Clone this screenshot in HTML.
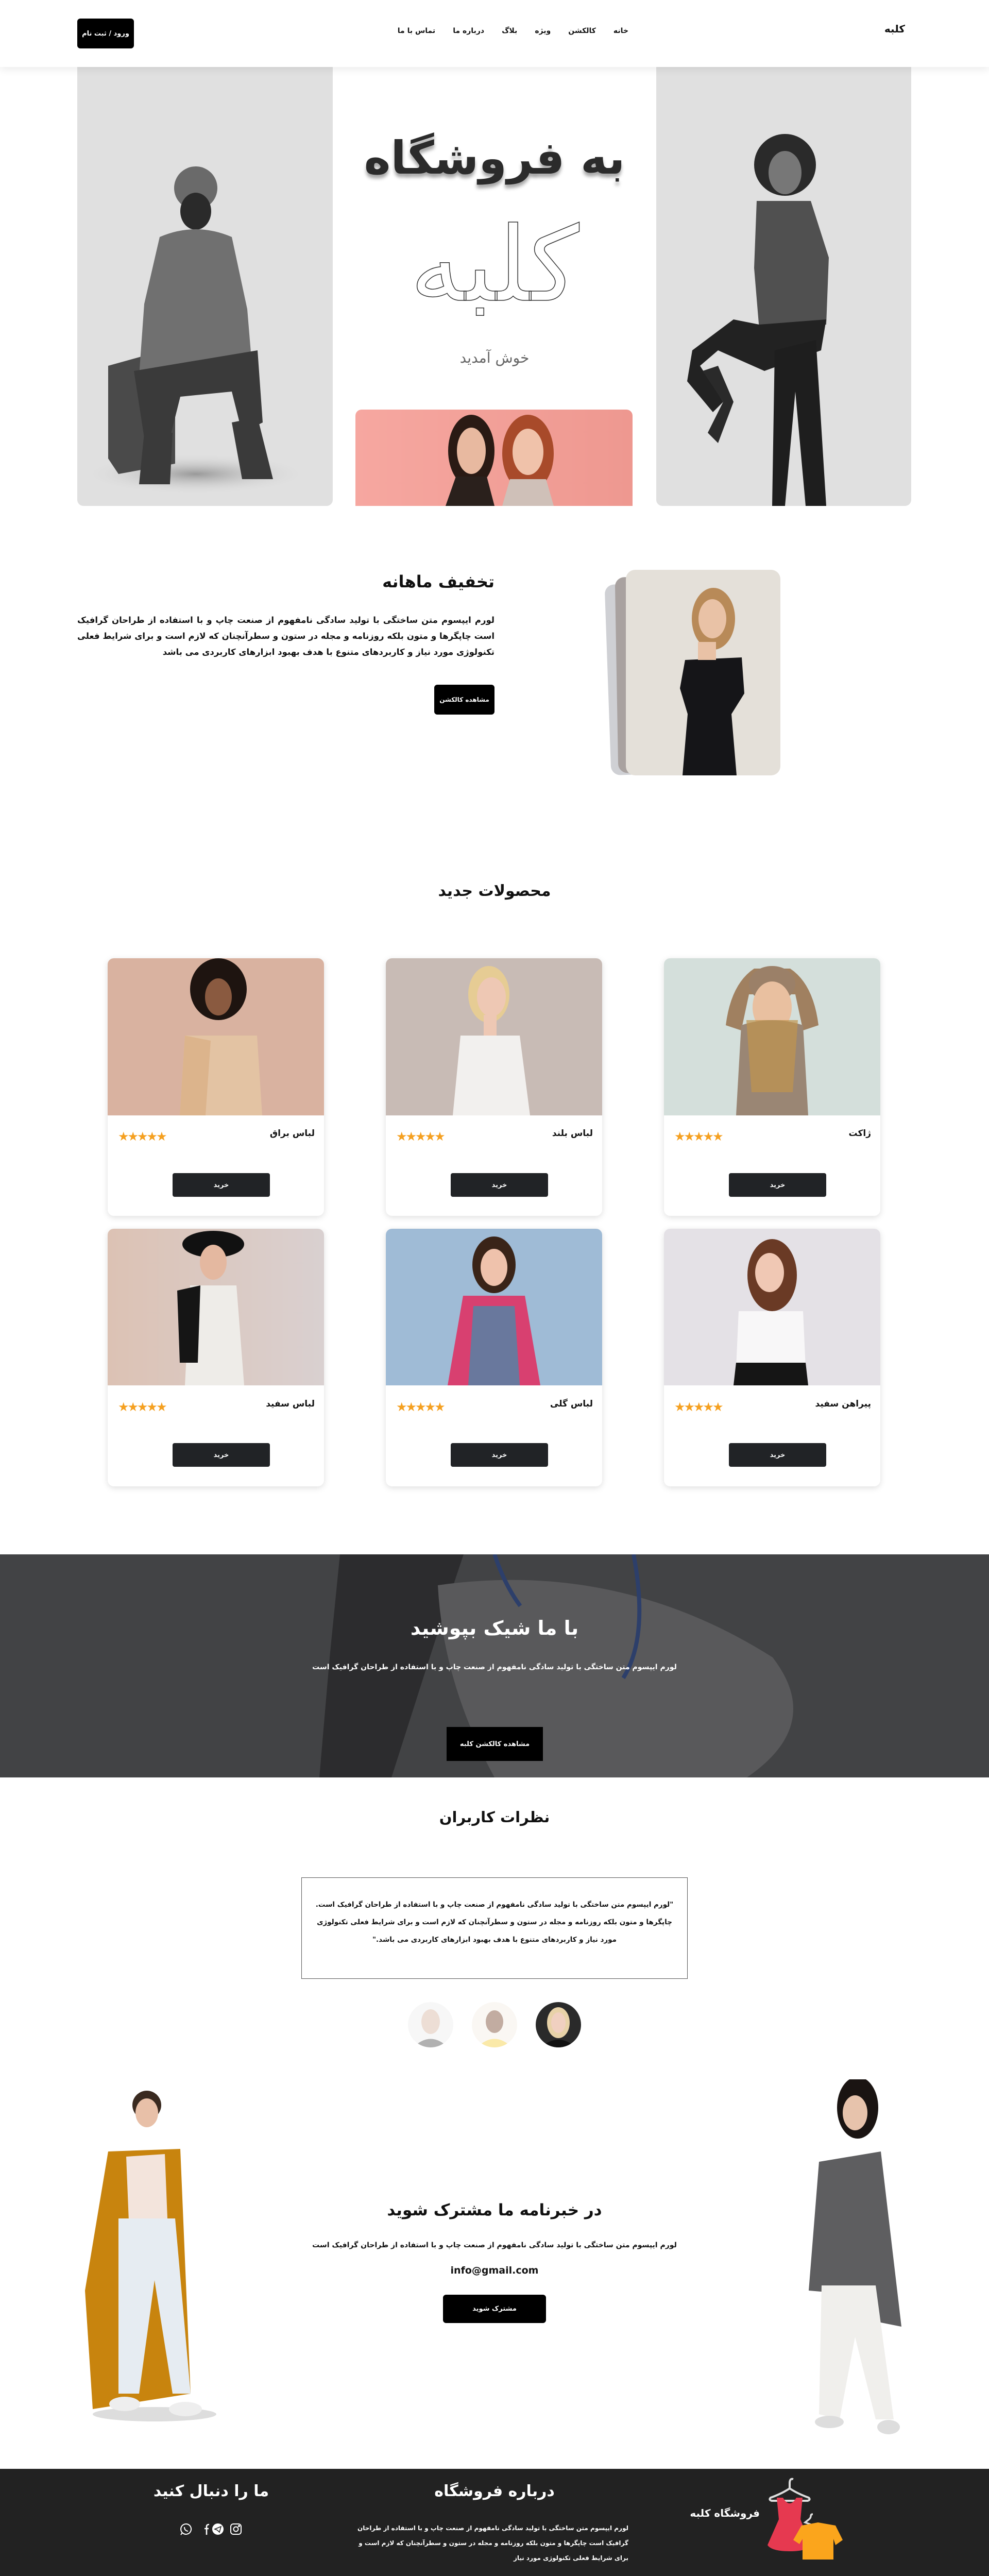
<!DOCTYPE html>
<html lang="fa" dir="rtl"><head><meta charset="utf-8"><title>کلبه</title>
<style>
*{margin:0;padding:0;box-sizing:border-box}
html{width:1920px;height:5003px;overflow:hidden}
body{width:1920px;height:5003px;position:relative;background:#fff;font-family:"DejaVu Sans",sans-serif;color:#111;overflow:hidden}
#w{position:absolute;left:0;top:0;width:1920px;height:5003px;overflow:hidden}
.a{position:absolute}
.c{text-align:center}
.btn{position:absolute;background:#000;color:#fff;border-radius:6px;display:flex;align-items:center;justify-content:center;font-weight:bold;font-size:13px}
.card{position:absolute;width:420px;background:#fff;border-radius:12px;box-shadow:0 3px 12px rgba(0,0,0,.13);overflow:hidden}
.card .img{height:305px;position:relative;overflow:hidden}
.card .t{position:absolute;right:18px;top:330px;font-size:17px;font-weight:bold}
.card .s{position:absolute;left:20px;top:332px;color:#f5a020;font-size:24px;letter-spacing:-3px}
.card .b{position:absolute;left:126px;width:189px;height:46px;background:#212326;color:#fff;border-radius:4px;font-size:13px;font-weight:bold;display:flex;align-items:center;justify-content:center}
p{font-weight:bold}
</style></head><body><div id="w">

<!-- NAV -->
<div class="a" style="left:0;top:0;width:1920px;height:130px;background:#fff;box-shadow:0 6px 14px rgba(0,0,0,.07);z-index:2"></div>
<div class="a" style="z-index:3;right:163px;top:44px;font-size:20px;font-weight:bold">کلبه</div>
<div class="a" style="z-index:3;left:760px;top:52px;width:460px;display:flex;gap:34px;font-size:14px;direction:rtl;font-weight:bold"><span>خانه</span><span>کالکشن</span><span>ویژه</span><span>بلاگ</span><span>درباره ما</span><span>تماس با ما</span></div>
<div class="btn" style="z-index:3;left:150px;top:36px;width:110px;height:58px;font-size:13px">ورود / ثبت نام</div>

<!-- HERO -->
<div class="a" style="left:150px;top:120px;width:496px;height:862px;background:#e0e0e0;border-radius:0 0 12px 12px;overflow:hidden">
<svg width="496" height="862" viewBox="0 0 496 862"><defs><radialGradient id="sh"><stop offset="0" stop-color="#999"/><stop offset="1" stop-color="#e0e0e0" stop-opacity="0"/></radialGradient></defs>
<ellipse cx="230" cy="800" rx="220" ry="40" fill="url(#sh)"/>
<path d="M60 590 L150 565 L190 600 L190 780 L80 800 L60 770Z" fill="#4a4a4a"/>
<circle cx="230" cy="245" r="42" fill="#6a6a6a"/>
<ellipse cx="230" cy="290" rx="30" ry="36" fill="#2a2a2a"/>
<path d="M160 340 Q230 310 300 340 L330 480 L340 600 L120 610 L130 470Z" fill="#707070"/>
<path d="M110 600 L350 560 L360 700 L320 720 L300 640 L200 650 L180 730 L130 730Z" fill="#3a3a3a"/>
<path d="M130 720 L185 720 L180 820 L120 820Z" fill="#3a3a3a"/>
<path d="M300 700 L350 690 L380 810 L320 810Z" fill="#3a3a3a"/>
</svg></div>
<div class="a" style="left:1274px;top:120px;width:495px;height:862px;background:#e0e0e0;border-radius:0 0 12px 12px;overflow:hidden">
<svg width="495" height="862" viewBox="0 0 495 862">
<circle cx="250" cy="200" r="60" fill="#2a2a2a"/>
<ellipse cx="250" cy="215" rx="32" ry="42" fill="#777"/>
<path d="M195 270 L300 270 L335 380 L330 510 L200 520 L190 400Z" fill="#505050"/>
<path d="M200 510 L330 500 L320 560 L210 600 L120 560 L85 590 L130 660 L110 680 L60 620 L70 560 L150 500Z" fill="#222"/>
<path d="M230 560 L310 540 L330 862 L290 862 L270 640 L250 862 L225 862Z" fill="#1e1e1e"/>
<path d="M90 600 L130 660 L100 720 L120 740 L150 660 L120 590Z" fill="#2a2a2a"/>
</svg></div>

<div class="a c" style="left:690px;top:250px;width:540px;font-size:88px;font-weight:bold;color:#2b2b2b;text-shadow:0 7px 7px rgba(0,0,0,.35);line-height:1.3">به فروشگاه</div>
<div class="a c" style="left:690px;top:395px;width:540px;font-size:200px;font-weight:normal;color:#fff;-webkit-text-stroke:1.5px #333;line-height:1.2">کلبه</div>
<div class="a c" style="left:690px;top:678px;width:540px;font-size:28px;color:#666">خوش آمدید</div>
<div class="a" style="left:690px;top:795px;width:538px;height:187px;background:linear-gradient(90deg,#f6a7a0,#ee9890);border-radius:12px 12px 0 0;overflow:hidden">
<svg width="538" height="187"><ellipse cx="225" cy="80" rx="45" ry="70" fill="#2a1a14"/><ellipse cx="225" cy="80" rx="28" ry="45" fill="#e8b9a0"/><path d="M175 187 L195 130 L255 130 L270 187Z" fill="#2a201c"/><ellipse cx="335" cy="85" rx="50" ry="75" fill="#a84a2a"/><ellipse cx="335" cy="82" rx="30" ry="45" fill="#f0c2aa"/><path d="M285 187 L300 135 L370 135 L385 187Z" fill="#cfc0b8"/></svg></div>

<!-- MONTHLY -->
<div class="a" style="left:1180px;top:1130px;width:290px;height:370px;background:#cfd0d4;border-radius:18px;transform:rotate(-2deg)"></div>
<div class="a" style="left:1197px;top:1118px;width:290px;height:380px;background:#a9a2a0;border-radius:18px;transform:rotate(-1deg)"></div>
<div class="a" style="left:1215px;top:1106px;width:300px;height:399px;background:#e4e0d9;border-radius:18px;overflow:hidden">
<svg width="300" height="399"><ellipse cx="170" cy="95" rx="42" ry="60" fill="#b88a58"/><ellipse cx="168" cy="95" rx="27" ry="38" fill="#e9c2a6"/><path d="M115 175 L225 170 L230 240 L205 280 L215 399 L110 399 L120 280 L105 230Z" fill="#151518"/><rect x="140" y="140" width="35" height="35" fill="#e9c2a6"/></svg></div>
<div class="a" style="left:700px;top:1110px;width:260px;font-size:32px;font-weight:bold;text-align:right">تخفیف ماهانه</div>
<p class="a" style="left:150px;top:1188px;width:810px;font-size:16.5px;line-height:31px;text-align:justify;text-align-last:right">لورم ایپسوم متن ساختگی با تولید سادگی نامفهوم از صنعت چاپ و با استفاده از طراحان گرافیک است چاپگرها و متون بلکه روزنامه و مجله در ستون و سطرآنچنان که لازم است و برای شرایط فعلی تکنولوژی مورد نیاز و کاربردهای متنوع با هدف بهبود ابزارهای کاربردی می باشد</p>
<div class="btn" style="left:843px;top:1329px;width:117px;height:58px;font-size:12px">مشاهده کالکشن</div>

<!-- PRODUCTS -->
<div class="a c" style="left:0;top:1712px;width:1920px;font-size:30px;font-weight:bold">محصولات جدید</div>

<div class="card" style="left:1289px;top:1860px;height:500px"><div class="img" style="background:#d4dfdb"><svg width="420" height="305"><path d="M120 130 Q130 50 175 20 L245 20 Q290 50 300 130 L270 140 L255 70 L165 70 L150 140Z" fill="#a08060"/><ellipse cx="210" cy="50" rx="45" ry="35" fill="#9b8068"/><ellipse cx="210" cy="95" rx="38" ry="50" fill="#e9c0a0"/><path d="M150 130 Q210 110 270 130 L280 305 L140 305Z" fill="#9a8674"/><path d="M160 120 L170 260 L250 260 L260 120" fill="#c0944e" opacity=".7"/></svg></div><div class="t">ژاکت</div><div class="s">★★★★★</div><div class="b" style="top:417px">خرید</div></div>
<div class="card" style="left:749px;top:1860px;height:500px"><div class="img" style="background:#c8bbb5"><svg width="420" height="305"><ellipse cx="200" cy="70" rx="40" ry="55" fill="#e6cc94"/><ellipse cx="205" cy="75" rx="28" ry="38" fill="#eec8b4"/><path d="M145 150 L260 150 L280 305 L130 305Z" fill="#f2f0ee"/><rect x="190" y="110" width="25" height="40" fill="#eec8b4"/></svg></div><div class="t">لباس بلند</div><div class="s">★★★★★</div><div class="b" style="top:417px">خرید</div></div>
<div class="card" style="left:209px;top:1860px;height:500px"><div class="img" style="background:#d9b2a0"><svg width="420" height="305"><ellipse cx="215" cy="60" rx="55" ry="60" fill="#1e1410"/><ellipse cx="215" cy="75" rx="26" ry="36" fill="#8a5a40"/><path d="M150 150 L290 150 L300 305 L140 305Z" fill="#e3c3a3"/><path d="M150 150 L200 160 L190 305 L140 305Z" fill="#dcb48c"/></svg></div><div class="t">لباس براق</div><div class="s">★★★★★</div><div class="b" style="top:417px">خرید</div></div>

<div class="card" style="left:1289px;top:2385px;height:500px"><div class="img" style="background:#e4e1e6;height:304px"><svg width="420" height="304"><ellipse cx="210" cy="90" rx="48" ry="70" fill="#6a3a25"/><ellipse cx="205" cy="85" rx="28" ry="38" fill="#f0c8b4"/><path d="M145 160 L270 160 L275 270 L140 270Z" fill="#f8f7f8"/><path d="M140 260 L275 260 L280 304 L135 304Z" fill="#151515"/></svg></div><div class="t" style="top:330px">پیراهن سفید</div><div class="s">★★★★★</div><div class="b" style="top:416px">خرید</div></div>
<div class="card" style="left:749px;top:2385px;height:500px"><div class="img" style="background:#9fbbd6;height:304px"><svg width="420" height="304"><ellipse cx="210" cy="70" rx="42" ry="55" fill="#3a2418"/><ellipse cx="210" cy="75" rx="26" ry="36" fill="#efc2ac"/><path d="M150 130 L270 130 L300 304 L120 304Z" fill="#d84070"/><path d="M170 150 L250 150 L260 304 L160 304Z" fill="#3a90b0" opacity=".7"/></svg></div><div class="t" style="top:330px">لباس گلی</div><div class="s">★★★★★</div><div class="b" style="top:416px">خرید</div></div>
<div class="card" style="left:209px;top:2385px;height:500px"><div class="img" style="background:linear-gradient(90deg,#dcc2b4,#d9d0d0);height:304px"><svg width="420" height="304"><ellipse cx="205" cy="30" rx="60" ry="26" fill="#111"/><ellipse cx="205" cy="65" rx="26" ry="34" fill="#e4b8a0"/><path d="M160 110 L250 110 L265 304 L150 304Z" fill="#eeece8"/><path d="M135 120 L180 110 L175 260 L140 260Z" fill="#151515"/></svg></div><div class="t" style="top:330px">لباس سفید</div><div class="s">★★★★★</div><div class="b" style="top:416px">خرید</div></div>

<!-- BANNER -->
<div class="a" style="left:0;top:3017px;width:1920px;height:433px;background:#424345;overflow:hidden">
<svg width="1920" height="433"><path d="M660 0 L900 0 L860 120 L760 433 L620 433 L640 200Z" fill="#2c2c2e"/><path d="M850 60 Q1200 10 1500 200 Q1600 330 1450 433 L960 433 Q860 250 850 60Z" fill="#59595b"/><path d="M1230 0 Q1260 160 1210 240" stroke="#2d3f6a" stroke-width="8" fill="none"/><path d="M960 0 Q980 60 1010 100" stroke="#2d3f6a" stroke-width="8" fill="none"/></svg></div>
<div class="a c" style="left:0;top:3138px;width:1920px;font-size:38px;font-weight:bold;color:#fff">با ما شیک بپوشید</div>
<p class="a c" style="left:0;top:3228px;width:1920px;font-size:14px;color:#fff">لورم ایپسوم متن ساختگی با تولید سادگی نامفهوم از صنعت چاپ و با استفاده از طراحان گرافیک است</p>
<div class="btn" style="left:867px;top:3352px;width:187px;height:66px;border-radius:0;font-size:13px">مشاهده کالکشن کلبه</div>

<!-- REVIEWS -->
<div class="a c" style="left:0;top:3510px;width:1920px;font-size:29px;font-weight:bold">نظرات کاربران</div>
<div class="a" style="left:585px;top:3644px;width:750px;height:197px;border:1px solid #555"></div>
<p class="a c" style="left:605px;top:3680px;width:710px;font-size:13.5px;line-height:34px">"لورم ایپسوم متن ساختگی با تولید سادگی نامفهوم از صنعت چاپ و با استفاده از طراحان گرافیک است. چاپگرها و متون بلکه روزنامه و مجله در ستون و سطرآنچنان که لازم است و برای شرایط فعلی تکنولوژی مورد نیاز و کاربردهای متنوع با هدف بهبود ابزارهای کاربردی می باشد."</p>
<div class="a" style="left:792px;top:3886px;width:88px;height:88px;border-radius:50%;background:#eee;opacity:.45;overflow:hidden"><svg width="88" height="88"><ellipse cx="44" cy="38" rx="18" ry="24" fill="#d9b8a4"/><path d="M10 88 Q44 55 78 88Z" fill="#555"/></svg></div>
<div class="a" style="left:916px;top:3886px;width:88px;height:88px;border-radius:50%;background:#f4eee6;opacity:.45;overflow:hidden"><svg width="88" height="88"><ellipse cx="44" cy="38" rx="17" ry="22" fill="#7a4a30"/><path d="M10 88 Q44 55 78 88Z" fill="#f5d040"/></svg></div>
<div class="a" style="left:1040px;top:3886px;width:88px;height:88px;border-radius:50%;background:#2a2a2a;overflow:hidden"><svg width="88" height="88"><ellipse cx="44" cy="40" rx="22" ry="30" fill="#e8d2a8"/><ellipse cx="44" cy="40" rx="14" ry="20" fill="#f0d0c0"/><path d="M10 88 Q44 58 78 88Z" fill="#111"/></svg></div>

<!-- NEWSLETTER -->
<div class="a" style="left:160px;top:4046px;width:300px;height:660px"><svg width="300" height="660"><ellipse cx="140" cy="640" rx="120" ry="14" fill="#ddd"/><circle cx="125" cy="40" r="28" fill="#3a2a20"/><ellipse cx="125" cy="55" rx="22" ry="28" fill="#e8c0a8"/><path d="M50 130 L190 125 L210 600 L20 630 L5 400Z" fill="#c8840e"/><path d="M85 140 L160 135 L165 260 L90 265Z" fill="#f3e4dc"/><path d="M70 260 L180 260 L210 600 L175 600 L140 380 L110 600 L70 600Z" fill="#e6ecf2"/><ellipse cx="82" cy="620" rx="30" ry="14" fill="#eee"/><ellipse cx="200" cy="630" rx="32" ry="14" fill="#eee"/></svg></div>
<div class="a" style="left:1520px;top:4036px;width:260px;height:700px"><svg width="260" height="700"><ellipse cx="145" cy="55" rx="40" ry="60" fill="#1a1412"/><ellipse cx="140" cy="65" rx="24" ry="34" fill="#e7c3ac"/><path d="M70 160 L190 140 L230 480 L180 470 L170 420 L50 410 Z" fill="#5e5e60"/><path d="M75 400 L180 400 L215 660 L180 660 L140 500 L110 660 L70 650Z" fill="#f0efec"/><ellipse cx="90" cy="665" rx="28" ry="12" fill="#ddd"/><ellipse cx="205" cy="675" rx="22" ry="14" fill="#ddd"/></svg></div>
<div class="a c" style="left:0;top:4272px;width:1920px;font-size:31px;font-weight:bold">در خبرنامه ما مشترک شوید</div>
<p class="a c" style="left:0;top:4350px;width:1920px;font-size:14px">لورم ایپسوم متن ساختگی با تولید سادگی نامفهوم از صنعت چاپ و با استفاده از طراحان گرافیک است</p>
<div class="a c" style="left:0;top:4396px;width:1920px;font-size:19px;direction:ltr;font-weight:bold">info@gmail.com</div>
<div class="btn" style="left:860px;top:4454px;width:200px;height:55px;font-size:13px">مشترک شوید</div>

<!-- FOOTER -->
<div class="a" style="left:0;top:4792px;width:1920px;height:211px;background:#222"></div>
<svg class="a" style="left:1488px;top:4800px" width="160" height="175" viewBox="0 0 160 175">
<path d="M45 30 Q30 40 8 48 Q4 52 10 54 L80 54 Q86 52 82 48 Q60 40 45 30 M45 30 L45 20 Q45 10 52 12" stroke="#ddd" stroke-width="4" fill="none"/>
<path d="M20 48 L32 48 Q45 70 58 48 L70 48 L66 90 L85 140 Q80 152 45 152 Q10 152 2 140 L24 90Z" fill="#e63950"/>
<path d="M86 100 L75 96 L80 92 Q86 88 86 84 Q86 80 90 80" stroke="#ddd" stroke-width="3.5" fill="none"/>
<path d="M68 102 L100 96 L134 102 L148 130 L134 140 L130 128 L130 168 L70 168 L70 128 L64 138 L52 130Z" fill="#fba51c"/>
</svg>
<div class="a" style="left:1300px;top:4866px;width:175px;font-size:20px;font-weight:bold;color:#fff;text-align:right;white-space:nowrap">فروشگاه کلبه</div>
<div class="a c" style="left:700px;top:4818px;width:520px;font-size:30px;font-weight:bold;color:#fff">درباره فروشگاه</div>
<p class="a" style="left:670px;top:4893px;width:550px;height:90px;overflow:hidden;font-size:12px;line-height:29px;color:#fff;text-align:right">لورم ایپسوم متن ساختگی با تولید سادگی نامفهوم از صنعت چاپ و با استفاده از طراحان گرافیک است چاپگرها و متون بلکه روزنامه و مجله در ستون و سطرآنچنان که لازم است و برای شرایط فعلی تکنولوژی مورد نیاز</p>
<div class="a c" style="left:260px;top:4818px;width:300px;font-size:30px;font-weight:bold;color:#fff">ما را دنبال کنید</div>
<svg class="a" style="left:348px;top:4896px" width="124" height="26" viewBox="0 0 124 26" fill="none" stroke="#fff" stroke-width="2">
<rect x="100" y="3" width="20" height="20" rx="5"/><circle cx="110" cy="13" r="4.5"/><circle cx="116" cy="7" r="1" fill="#fff"/>
<circle cx="75" cy="13" r="10" fill="#fff"/><path d="M69 13 L81 8 L78 19 L74 15Z" stroke="#222" stroke-width="1.6" fill="none"/>
<path d="M53 24 L53 12 L57 12 M49 12 L57 12 M53 24 L53 8 Q53 4 58 4" stroke-width="2.6"/>
<path d="M14 3 A10 10 0 1 1 6 20 L3 24 L6 20 A10 10 0 0 1 14 3Z"/><path d="M10 9 Q10 16 17 17" />
</svg>
</div></body></html>
